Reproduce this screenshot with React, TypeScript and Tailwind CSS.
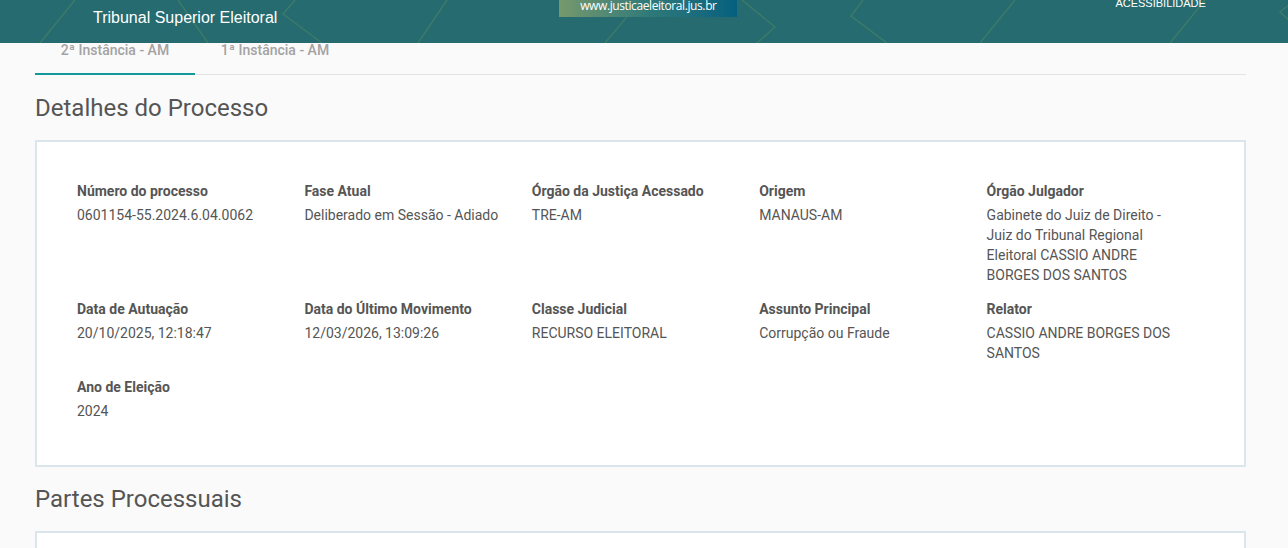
import React from "react";

const items: { label: string; value: string }[] = [
  { label: "Número do processo", value: "0601154-55.2024.6.04.0062" },
  { label: "Fase Atual", value: "Deliberado em Sessão - Adiado" },
  { label: "Órgão da Justiça Acessado", value: "TRE-AM" },
  { label: "Origem", value: "MANAUS-AM" },
  {
    label: "Órgão Julgador",
    value: "Gabinete do Juiz de Direito - Juiz do Tribunal Regional Eleitoral CASSIO ANDRE BORGES DOS SANTOS",
  },
  { label: "Data de Autuação", value: "20/10/2025, 12:18:47" },
  { label: "Data do Último Movimento", value: "12/03/2026, 13:09:26" },
  { label: "Classe Judicial", value: "RECURSO ELEITORAL" },
  { label: "Assunto Principal", value: "Corrupção ou Fraude" },
  { label: "Relator", value: "CASSIO ANDRE BORGES DOS SANTOS" },
  { label: "Ano de Eleição", value: "2024" },
];

function HeaderLines() {
  return (
    <svg
      className="absolute inset-0 pointer-events-none"
      width="1288"
      height="43"
      viewBox="0 0 1288 43"
      fill="none"
    >
      <g stroke="#3c7b6b" strokeWidth="1.5">
        <path d="M75 0 L40 43" />
        <path d="M178 0 L208 43" />
        <path d="M295 0 L283 14 L322 43" />
        <path d="M447 0 L418 43" />
        <path d="M641 0 L605 43" />
        <path d="M742 0 L775 27 L757 43" />
        <path d="M863 0 L851 16 L887 43" />
        <path d="M1015 0 L980 43" />
        <path d="M1205 0 L1170 43" />
        <path d="M1295 0 L1280 12 L1300 30" />
      </g>
    </svg>
  );
}

export default function App() {
  return (
    <div
      className="w-[1288px] h-[548px] overflow-hidden bg-[#fafafa]"
      style={{ fontFamily: "Roboto, 'Liberation Sans', sans-serif" }}
    >
      {/* Header */}
      <div className="relative h-[43px] bg-[#256b6f] overflow-hidden z-10">
        <HeaderLines />
        <div className="relative flex h-full">
          <div
            className="pl-[93px] pt-[8px] text-[16px] leading-[20px] text-white"
            style={{ fontFamily: "'Liberation Sans', Arial, sans-serif" }}
          >
            Tribunal Superior Eleitoral
          </div>
          <div className="ml-[282px] h-[17px] w-[178px] bg-gradient-to-r from-[#76996c] via-[#2f7a78] to-[#03607f] flex justify-center">
            <span
              className="text-[12px] leading-[12px] tracking-[-0.4px] text-white"
              style={{ fontFamily: "'Open Sans', 'Liberation Sans', sans-serif" }}
            >
              www.justicaeleitoral.jus.br
            </span>
          </div>
          <div
            className="ml-[378px] -mt-[3px] text-[11px] leading-[12px] text-white"
            style={{ fontFamily: "'Liberation Sans', Arial, sans-serif" }}
          >
            ACESSIBILIDADE
          </div>
        </div>
      </div>

      {/* Main */}
      <div className="pl-[35px] pr-[42px]">
        {/* Tabs */}
        <div className="flex h-[32px] border-b border-[#e3e3e3]">
          <div className="w-[160px] flex justify-center border-b-2 border-[#13999a] -mb-[1px]">
            <span className="text-[14px] leading-[14px] font-medium text-[#a3a3a3]">2ª Instância - AM</span>
          </div>
          <div className="w-[160px] flex justify-center">
            <span className="text-[14px] leading-[14px] font-medium text-[#a3a3a3]">1ª Instância - AM</span>
          </div>
        </div>

        <h2 className="mt-[18px] text-[24px] leading-[30px] text-[#555555]">Detalhes do Processo</h2>

        <div className="mt-[17px] h-[327px] border-2 border-[#dae5ec] bg-white pt-[39px] pl-[40px] pr-[30px]">
          <div className="grid grid-cols-5 gap-y-[14px]">
            {items.map((it) => (
              <div key={it.label} className="pr-[29px] text-[14px] text-[#555555]">
                <div className="font-bold leading-[20px]">{it.label}</div>
                <div className="mt-[4px] leading-[20px]">{it.value}</div>
              </div>
            ))}
          </div>
        </div>

        <h2 className="mt-[17px] text-[24px] leading-[30px] text-[#555555]">Partes Processuais</h2>

        <div className="mt-[17px] h-[100px] border-2 border-[#dae5ec] bg-white" />
      </div>
    </div>
  );
}
